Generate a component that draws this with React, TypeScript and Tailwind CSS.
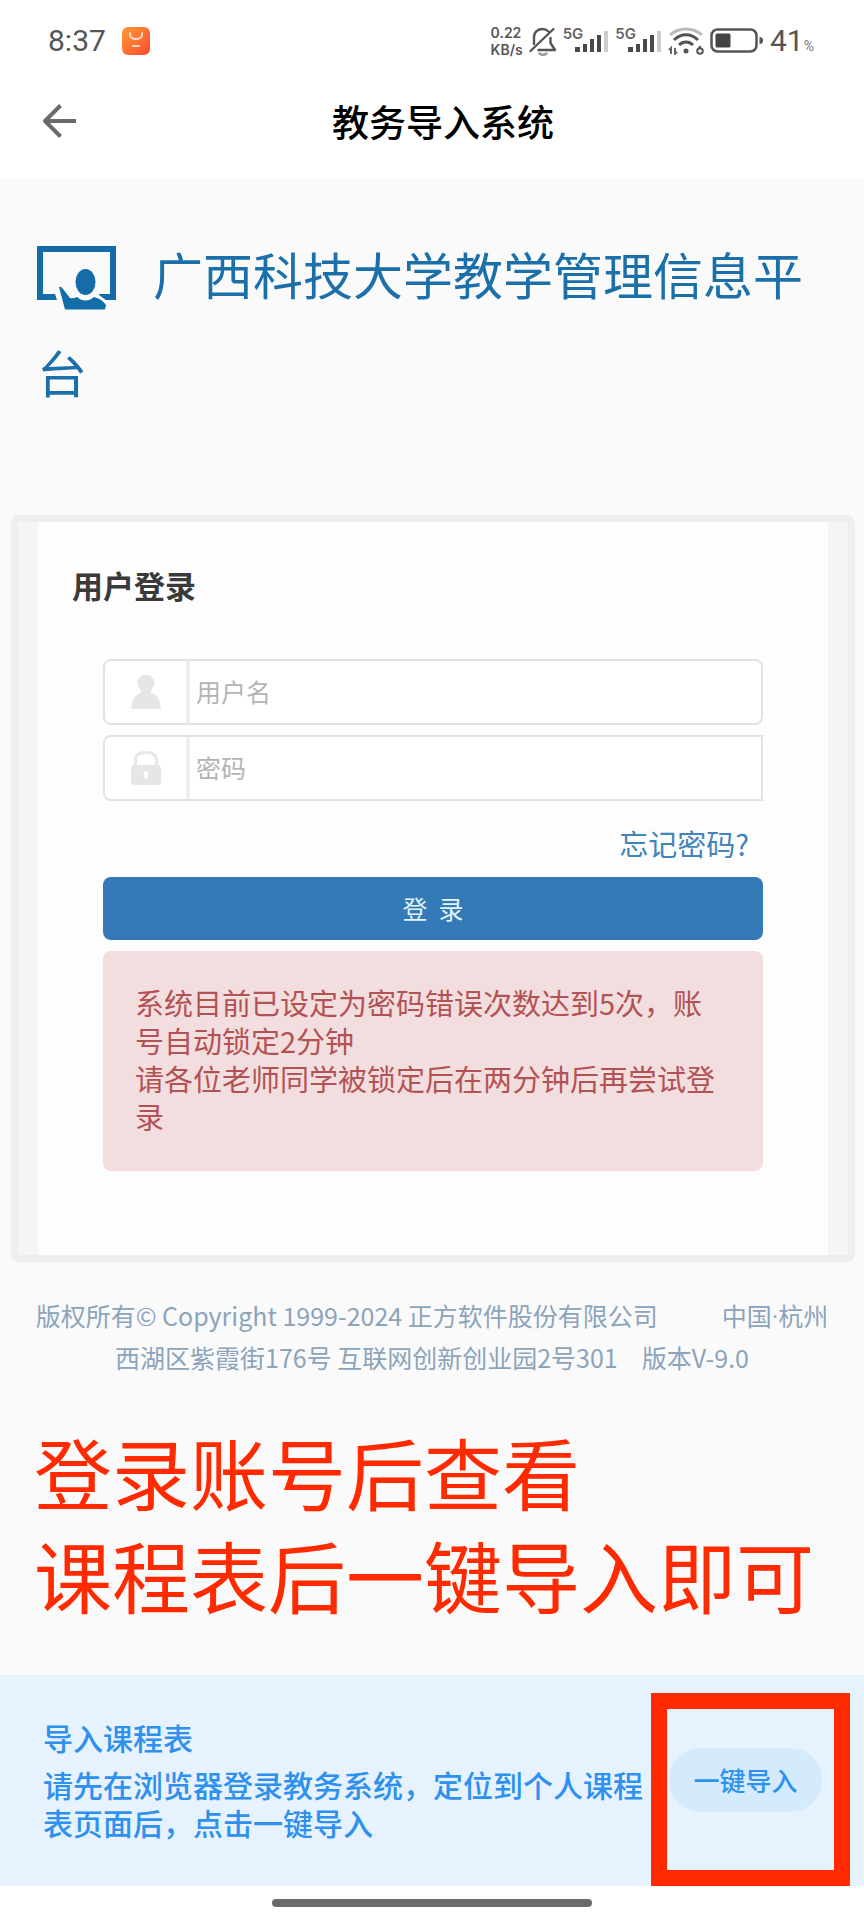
import React from "react";

function AppBadge() {
  return (
    <svg width="28" height="28" viewBox="0 0 28 28" aria-hidden="true">
      <defs>
        <linearGradient id="badge" x1="0" y1="0" x2="1" y2="1">
          <stop offset="0" stopColor="#ff9a3a" />
          <stop offset="1" stopColor="#fb4a2c" />
        </linearGradient>
      </defs>
      <rect width="28" height="28" rx="6" fill="url(#badge)" />
      <path d="M8 6v2a6 4 0 0 0 12 0V6" fill="none" stroke="#ffd9b8" strokeWidth="2" strokeLinecap="round" />
      <path d="M11 19h6" stroke="#ffd9b8" strokeWidth="2" strokeLinecap="round" />
    </svg>
  );
}

function MutedBell() {
  return (
    <svg width="28" height="30" viewBox="0 0 28 30" fill="none" stroke="#555" strokeWidth="2.4" strokeLinecap="round" strokeLinejoin="round" aria-hidden="true">
      <path d="M5 18V11C5 6 9 3 13.500 3C16 3 18 4 19.500 5.500" />
      <path d="M1.500 25L24.500 3" />
      <path d="M21.500 12V17L26 24H9.500" />
      <path d="M10.500 27.500Q14 30 17.500 27.500" stroke="#999" />
    </svg>
  );
}

function Signal() {
  return (
    <div className="flex items-end">
      <span className="self-start font-['Inter',sans-serif] text-[15px] leading-[14px] font-semibold text-[#666]">5G</span>
      <svg className="-ml-2" width="34" height="28" viewBox="0 0 34 28" aria-hidden="true">
        <rect x="0" y="20" width="5" height="5" fill="#4a4a4a" />
        <rect x="8" y="17" width="4" height="8" fill="#4a4a4a" />
        <rect x="15" y="12" width="4" height="13" fill="#4a4a4a" />
        <rect x="22" y="8" width="4" height="17" fill="#4a4a4a" />
        <rect x="29" y="4" width="4" height="21" fill="#ccc" />
      </svg>
    </div>
  );
}

function Wifi() {
  return (
    <svg width="36" height="28" viewBox="0 0 36 28" fill="none" aria-hidden="true">
      <path d="M2 8C11 0 25 0 34 8" stroke="#bbb" strokeWidth="3" />
      <path d="M6 13C13 6 23 6 30 13" stroke="#555" strokeWidth="3" />
      <path d="M11 18C15 14 21 14 25 18" stroke="#555" strokeWidth="3" />
      <circle cx="18" cy="24" r="2.500" fill="#555" />
      <path d="M3 27V21L1 23M7 21V27L9 25" stroke="#666" strokeWidth="2" />
      <circle cx="32" cy="24" r="2.800" stroke="#555" strokeWidth="2" />
      <path d="M30 22.500L32.500 19" stroke="#555" strokeWidth="2" />
    </svg>
  );
}

function Battery() {
  return (
    <svg width="54" height="26" viewBox="0 0 54 26" fill="none" aria-hidden="true">
      <rect x="1.500" y="1.500" width="45" height="22" rx="6" stroke="#555" strokeWidth="2.500" />
      <rect x="5.500" y="5.500" width="15" height="14" rx="1.500" fill="#444" />
      <path d="M49.500 9C52 9 53 10.500 53 12.500S52 16 49.500 16Z" fill="#555" />
    </svg>
  );
}

function TeacherLogo() {
  return (
    <svg className="mr-9 mb-[6px] inline-block align-middle" width="80" height="64" viewBox="0 0 80 64" fill="#146ca8" aria-hidden="true">
      <path d="M0 0H79V54H69L62 49V48H73V6H6V48H18L20 54H0Z" />
      <ellipse cx="48.500" cy="36" rx="10" ry="13" />
      <path d="M22 41Q24 40 26 43L33 52Q36 53 40 51Q44 54.500 48.500 54.500Q53 54.500 57 51Q65 53 69 59L68 63.500H28Z" />
    </svg>
  );
}

function PersonIcon() {
  return (
    <svg width="30" height="34" viewBox="0 0 30 34" fill="#e6e6e6" aria-hidden="true">
      <path d="M15 0C20 0 23.500 3 23.500 8C23.500 11.500 21 13 20 16C19.500 18 22 18.500 24 20C28 22.500 29.500 28 30 34H0C.500 28 2 22.500 6 20C8 18.500 10.500 18 10 16C9 13 6.500 11.500 6.500 8C6.500 3 10 0 15 0Z" />
    </svg>
  );
}

function LockIcon() {
  return (
    <svg width="30" height="34" viewBox="0 0 30 34" aria-hidden="true">
      <path d="M4.500 16V9C4.500 4 8 1.500 15 1.500S25.500 4 25.500 9V16" fill="none" stroke="#e8e8e8" strokeWidth="3" />
      <rect y="14" width="30" height="20" rx="4" fill="#e6e6e6" />
      <path d="M15 20A2.500 2.500 0 0 1 16.500 24.500V28H13.500V24.500A2.500 2.500 0 0 1 15 20Z" fill="#fff" />
    </svg>
  );
}

export default function App() {
  return (
    <div className="flex min-h-screen flex-col bg-white font-['Noto_Sans_CJK_SC',sans-serif]">
      <div className="flex h-[82px] items-center justify-between pr-[50px] pl-12 font-['Roboto',sans-serif] text-[#555]">
        <div className="flex items-center gap-4">
          <span className="text-[30px] leading-8">8:37</span>
          <AppBadge />
        </div>
        <div className="flex items-center gap-[6px]">
          <div className="font-['Inter',sans-serif] text-[14px] leading-[17px] font-semibold">
            <div>0.22</div>
            <div>KB/s</div>
          </div>
          <MutedBell />
          <Signal />
          <Signal />
          <Wifi />
          <Battery />
          <div className="flex items-baseline">
            <span className="text-[30px] leading-8">41</span>
            <span className="text-[14px] text-[#777]">%</span>
          </div>
        </div>
      </div>

      <header className="grid grid-cols-[1fr_auto_1fr] items-center px-[42px] pt-3 pb-[30px]">
        <button type="button" aria-label="返回" className="justify-self-start">
          <svg width="34" height="34" viewBox="0 0 34 34" fill="none" stroke="#6a6a6a" strokeWidth="4" strokeLinejoin="round" aria-hidden="true">
            <path d="M18.500 1.500L3 17L18.500 32.500M3 17H34" />
          </svg>
        </button>
        <h1 className="pl-[22px] text-[37px] leading-[54px] font-medium text-black">教务导入系统</h1>
      </header>

      <main className="flex-1 bg-[#fafafa] pt-[46px] pb-[49px]">
        <h2 className="pr-9 pl-[37px] text-[50px] leading-[98px] text-[#1c70aa]">
          <TeacherLogo />
          广西科技大学教学管理信息平台
        </h2>

        <section className="mt-[95px] mr-[9px] ml-[11px] rounded-lg border-[7px] border-[#eee] bg-[#f5f5f5] px-5">
          <form className="bg-[#fdfdfd] pt-[39px] pr-8 pb-[84px] pl-[34px]" onSubmit={(e) => e.preventDefault()}>
            <h3 className="text-[31px] leading-[48px] font-bold text-[#3a3a3a]">用户登录</h3>
            <div className="mt-[50px] mr-[33px] ml-[31px]">
              <div className="flex h-[66px] rounded-lg border-2 border-[#e2e2e2] bg-white">
                <label htmlFor="user" aria-label="用户名" className="flex w-[85px] items-center justify-center border-r-4 border-[#eee]">
                  <PersonIcon />
                </label>
                <input id="user" type="text" placeholder="用户名" className="min-w-0 flex-1 rounded-r-lg px-[6px] text-[25px] outline-none placeholder:text-[#b4b4b4]" />
              </div>
              <div className="mt-[10px] flex h-[66px] rounded-l-lg border-2 border-[#e2e2e2] bg-white">
                <label htmlFor="pass" aria-label="密码" className="flex w-[85px] items-center justify-center border-r-4 border-[#eee]">
                  <LockIcon />
                </label>
                <input id="pass" type="password" placeholder="密码" className="min-w-0 flex-1 px-[6px] text-[25px] outline-none placeholder:text-[#b4b4b4]" />
              </div>
              <div className="pt-[18px] pr-[14px] pb-[10px] text-right text-[29px] leading-[48px]">
                <a href="#" className="text-[#4385b9]">忘记密码?</a>
              </div>
              <button type="submit" className="h-[63px] w-full rounded-lg bg-[#337ab7] text-[25px] whitespace-pre text-[#e4f2fb]">登&nbsp;&nbsp;录</button>
              <div role="alert" className="mt-[11px] rounded-lg bg-[#f2dede] px-8 pt-8 pb-9 text-[29px] leading-[38px] text-[#b35254]">
                <p>系统目前已设定为密码错误次数达到5次，账号自动锁定2分钟</p>
                <p>请各位老师同学被锁定后在两分钟后再尝试登录</p>
              </div>
            </div>
          </form>
        </section>

        <footer className="mt-8 px-6 text-center text-[25px] leading-[42px] text-[#8ba4bb]">
          <p>
            版权所有© Copyright 1999-2024 正方软件股份有限公司
            <span className="ml-16">中国<span className="font-['Roboto',sans-serif] leading-none">·</span>杭州</span>
          </p>
          <p>西湖区紫霞街176号 互联网创新创业园2号301<span className="ml-6">版本V-9.0</span></p>
        </footer>

        <p className="mt-[42px] px-[34px] text-[78px] leading-[103px] text-[#ff2a00]">
          登录账号后查看
          <br />
          课程表后一键导入即可
        </p>
      </main>

      <aside className="relative flex items-center gap-4 bg-[#e6f2fe] pt-[43px] pr-[42px] pb-[45px] pl-[43px] font-medium text-[#2e90ef]">
        <div className="min-w-0 flex-1 text-[30px] leading-[38px]">
          <h2>导入课程表</h2>
          <p className="mt-[9px]">请先在浏览器登录教务系统，定位到个人课程表页面后，点击一键导入</p>
        </div>
        <button type="button" className="h-16 w-[153px] shrink-0 rounded-full bg-[#d4eafd] text-[26px]">一键导入</button>
        <div className="pointer-events-none absolute top-[18px] right-[14px] bottom-0 w-[199px] border-[16px] border-[#ff2a00]" />
      </aside>

      <div className="flex h-[34px] items-center justify-center bg-white">
        <div className="h-2 w-[37%] rounded-full bg-[#6b6b6b]" />
      </div>
    </div>
  );
}
